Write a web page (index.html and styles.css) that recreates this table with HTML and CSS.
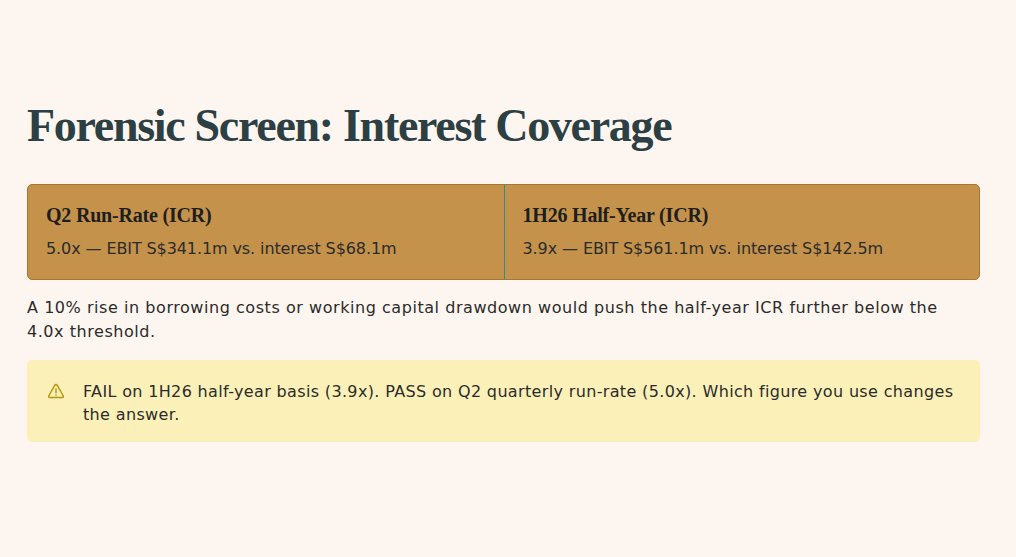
FILE: index.html
```html
<!DOCTYPE html>
<html lang="en">
<head>
<meta charset="utf-8">
<title>Forensic Screen: Interest Coverage</title>
<link rel="stylesheet" href="styles.css">
</head>
<body>
<main class="page">
  <h1 class="title">Forensic Screen: Interest Coverage</h1>
  <section class="metrics">
    <div class="metric">
      <h2 class="metric-title">Q2 Run-Rate (ICR)</h2>
      <p class="metric-value">5.0x — EBIT S$341.1m vs. interest S$68.1m</p>
    </div>
    <div class="metric">
      <h2 class="metric-title">1H26 Half-Year (ICR)</h2>
      <p class="metric-value">3.9x — EBIT S$561.1m vs. interest S$142.5m</p>
    </div>
  </section>
  <p class="note">A 10% rise in borrowing costs or working capital drawdown would push the half-year ICR further below the 4.0x threshold.</p>
  <div class="alert">
    <svg class="alert-icon" viewBox="0 0 24 24" width="18" height="18" aria-hidden="true">
      <path d="M10.3 4.6 Q12 1.9 13.7 4.6 L21.4 18 Q22.9 20.6 19.9 20.6 H4.1 Q1.1 20.6 2.6 18 Z" fill="none" stroke="#b8960c" stroke-width="2" stroke-linejoin="round"/>
      <line x1="12" y1="9.3" x2="12" y2="14.2" stroke="#b8960c" stroke-width="2" stroke-linecap="round"/>
      <circle cx="12" cy="17.4" r="1.1" fill="#b8960c"/>
    </svg>
    <p class="alert-text">FAIL on 1H26 half-year basis (3.9x). PASS on Q2 quarterly run-rate (5.0x). Which figure you use changes the answer.</p>
  </div>
</main>
</body>
</html>
```
FILE: styles.css
```css
html, body {
  margin: 0;
  padding: 0;
  background: #fdf6f0;
}
body {
  font-family: "DejaVu Sans", "Open Sans", sans-serif;
  color: #2b2b2b;
}
.page {
  width: 953px;
  padding: 96px 0 40px 27px;
}
.title {
  margin: 0 0 28px 0;
  font-family: "Liberation Serif", "DejaVu Serif", serif;
  font-weight: 700;
  font-size: 46px;
  line-height: 60px;
  letter-spacing: -1.3px;
  color: #2c4044;
}
.metrics {
  display: grid;
  grid-template-columns: 1fr 1fr;
  background: #c4924a;
  border: 1px solid #a8762f;
  border-radius: 5px;
}
.metric {
  padding: 17px 18px 19px 18px;
}
.metric + .metric {
  border-left: 1px solid #3f8a7f;
}
.metric-title {
  margin: 0 0 10px 0;
  font-family: "Liberation Serif", "DejaVu Serif", serif;
  font-weight: 700;
  font-size: 20px;
  line-height: 26px;
  letter-spacing: -0.2px;
  color: #1e1e1e;
}
.metric-value {
  margin: 0;
  font-size: 16px;
  line-height: 22px;
  letter-spacing: -0.1px;
  color: #2b2b2b;
}
.note {
  max-width: 935px;
  margin: 16px 0 16px 0;
  font-size: 16px;
  line-height: 24px;
  letter-spacing: 0.55px;
}
.alert {
  display: flex;
  align-items: flex-start;
  gap: 18px;
  background: #fbf1b8;
  border-radius: 5px;
  padding: 20px 24px 16px 20px;
}
.alert-icon {
  flex: none;
  margin-top: 2px;
}
.alert-text {
  margin: 0;
  font-size: 16px;
  line-height: 23px;
  letter-spacing: 0.35px;
}
```
